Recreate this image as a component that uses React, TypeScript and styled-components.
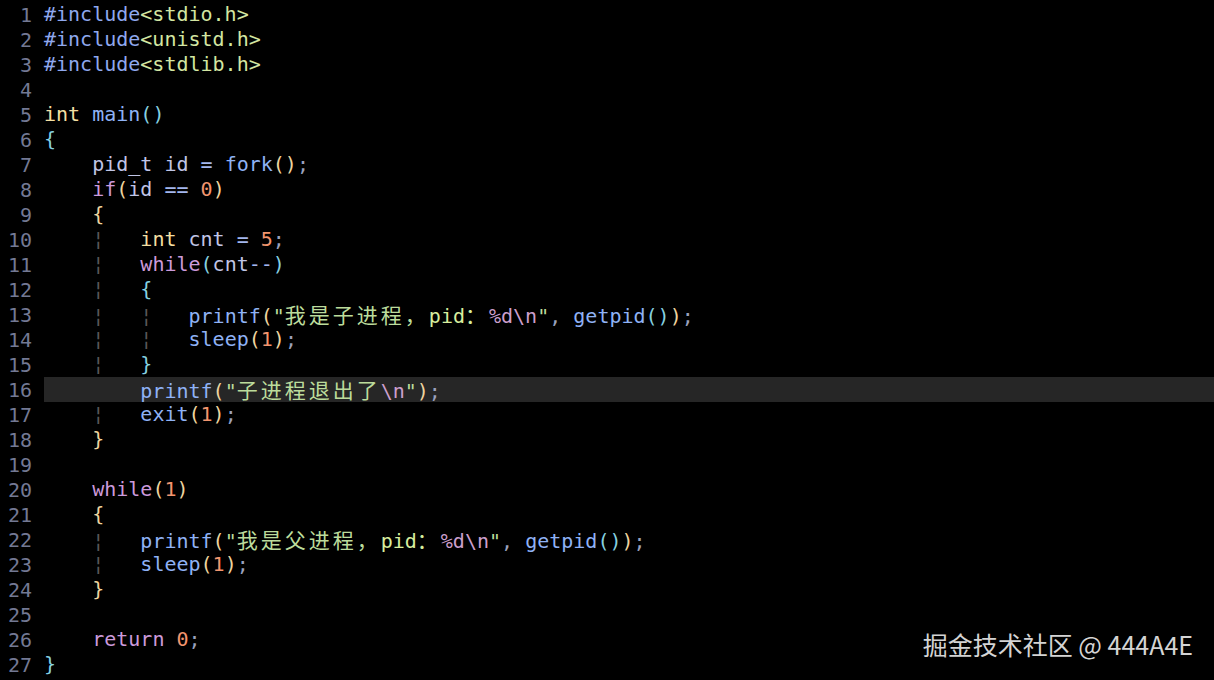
import React from "react";
import styled, { createGlobalStyle } from "styled-components";

const Global = createGlobalStyle`
  html, body { margin: 0; padding: 0; background: #000; }
  #root { width: 1214px; height: 680px; }
`;

const colors: Record<string, string> = {
  p: "#c0c5e6",
  inc: "#8fa8ee",
  hdr: "#d3e6a2",
  type: "#f3dfa2",
  fn: "#8fb2f5",
  cy: "#86d1e0",
  ye: "#eed49f",
  id: "#c0c5e6",
  op: "#a3b6ee",
  pu: "#9aa0bd",
  kw: "#cc9adb",
  num: "#f2956e",
  str: "#bcdc9c",
  strb: "#d8ee9e",
  esc: "#cc9fcc",
  g: "#5a5858",
};

const Screen = styled.div`
  position: relative;
  width: 1214px;
  height: 680px;
  background: #000;
  overflow: hidden;
`;

const Editor = styled.div`
  display: flex;
  flex-direction: column;
  padding-top: 2px;
  font-family: "DejaVu Sans Mono", "Noto Sans CJK SC", monospace;
  font-size: 20px;
`;

const Row = styled.div`
  display: flex;
  height: 25px;
  align-items: center;
`;

const LineNr = styled.span`
  width: 32px;
  padding-right: 12px;
  box-sizing: content-box;
  text-align: right;
  color: #737994;
  flex-shrink: 0;
`;

const Code = styled.span<{ $current?: boolean }>`
  flex: 1;
  height: 25px;
  line-height: 25px;
  white-space: pre;
  background: ${(p) => (p.$current ? "#262626" : "transparent")};
`;

const Tok = styled.span<{ $k: string }>`
  color: ${(p) => colors[p.$k] || "#c0c5e6"};
`;

const Cjk = styled.span`
  font-family: "Noto Sans CJK SC", sans-serif;
  font-size: 21px;
  letter-spacing: 3px;
`;

const Watermark = styled.div`
  position: absolute;
  right: 21px;
  top: 628px;
  font-family: "Noto Sans CJK SC", "Noto Sans", sans-serif;
  font-size: 25px;
  line-height: 32px;
  color: #d4d4d4;
  white-space: pre;
`;

type T = [string, string];

const G4: T[] = [["p", "    "], ["g", "¦"], ["p", "   "]];
const G8: T[] = [...G4, ["g", "¦"], ["p", "   "]];

const lines: T[][] = [
  [["inc", "#include"], ["hdr", "<stdio.h>"]],
  [["inc", "#include"], ["hdr", "<unistd.h>"]],
  [["inc", "#include"], ["hdr", "<stdlib.h>"]],
  [],
  [["type", "int"], ["p", " "], ["fn", "main"], ["cy", "()"]],
  [["cy", "{"]],
  [["p", "    "], ["id", "pid_t id "], ["op", "="], ["p", " "], ["fn", "fork"], ["ye", "()"], ["pu", ";"]],
  [["p", "    "], ["kw", "if"], ["ye", "("], ["id", "id "], ["op", "=="], ["p", " "], ["num", "0"], ["ye", ")"]],
  [["p", "    "], ["ye", "{"]],
  [...G4, ["type", "int"], ["id", " cnt "], ["op", "="], ["p", " "], ["num", "5"], ["pu", ";"]],
  [...G4, ["kw", "while"], ["cy", "("], ["id", "cnt"], ["op", "--"], ["cy", ")"]],
  [...G4, ["cy", "{"]],
  [...G8, ["fn", "printf"], ["ye", "("], ["str", "\"我是子进程，"], ["strb", "pid："], ["esc", "%d\\n"], ["str", "\""], ["pu", ", "], ["fn", "getpid"], ["cy", "()"], ["ye", ")"], ["pu", ";"]],
  [...G8, ["fn", "sleep"], ["ye", "("], ["num", "1"], ["ye", ")"], ["pu", ";"]],
  [...G4, ["cy", "}"]],
  [["p", "        "], ["fn", "printf"], ["ye", "("], ["str", "\"子进程退出了"], ["esc", "\\n"], ["str", "\""], ["ye", ")"], ["pu", ";"]],
  [...G4, ["fn", "exit"], ["ye", "("], ["num", "1"], ["ye", ")"], ["pu", ";"]],
  [["p", "    "], ["ye", "}"]],
  [],
  [["p", "    "], ["kw", "while"], ["ye", "("], ["num", "1"], ["ye", ")"]],
  [["p", "    "], ["ye", "{"]],
  [...G4, ["fn", "printf"], ["ye", "("], ["str", "\"我是父进程，"], ["strb", "pid："], ["esc", "%d\\n"], ["str", "\""], ["pu", ", "], ["fn", "getpid"], ["cy", "()"], ["ye", ")"], ["pu", ";"]],
  [...G4, ["fn", "sleep"], ["ye", "("], ["num", "1"], ["ye", ")"], ["pu", ";"]],
  [["p", "    "], ["ye", "}"]],
  [],
  [["p", "    "], ["kw", "return"], ["p", " "], ["num", "0"], ["pu", ";"]],
  [["cy", "}"]],
];

const cjkRe = /([\u3000-\u303f\u4e00-\u9fff\uff00-\uffef]+)/;

function renderText(text: string) {
  return text.split(cjkRe).map((part, i) =>
    cjkRe.test(part) ? <Cjk key={i}>{part}</Cjk> : <React.Fragment key={i}>{part}</React.Fragment>
  );
}

export default function App() {
  return (
    <Screen>
      <Global />
      <Editor>
        {lines.map((toks, i) => {
          const current = i === 15;
          return (
            <Row key={i}>
              <LineNr>{i + 1}</LineNr>
              <Code $current={current}>
                {toks.map(([k, t], j) => (
                  <Tok key={j} $k={k}>
                    {renderText(t)}
                  </Tok>
                ))}
              </Code>
            </Row>
          );
        })}
      </Editor>
      <Watermark>掘金技术社区 @ 444A4E</Watermark>
    </Screen>
  );
}
